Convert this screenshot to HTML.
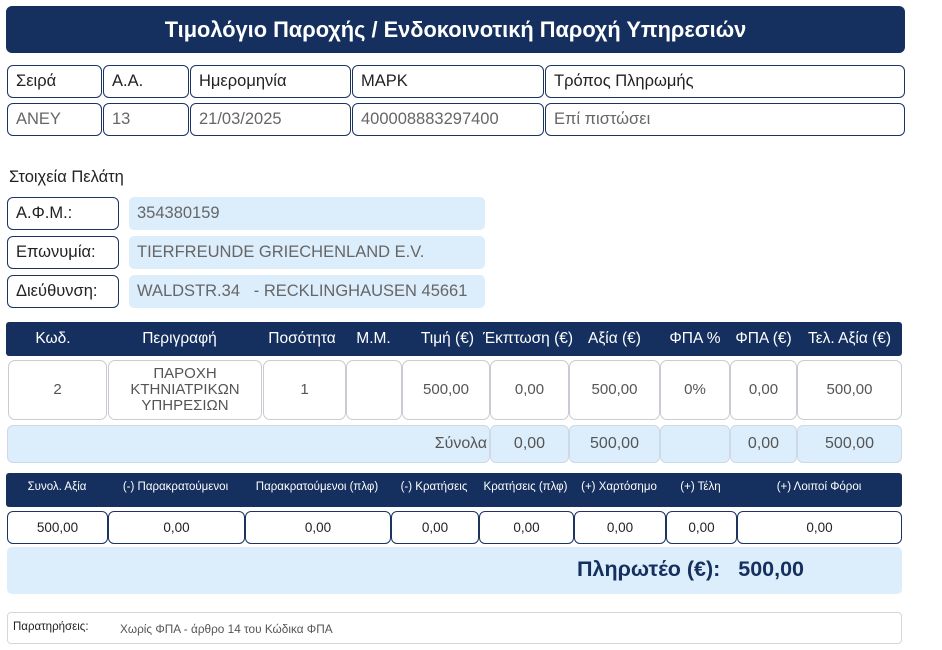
<!DOCTYPE html>
<html><head><meta charset="utf-8"><style>
*{box-sizing:border-box;margin:0;padding:0}
body{width:942px;height:650px;background:#fff;font-family:"Liberation Sans","DejaVu Sans",sans-serif;position:relative;overflow:hidden;color:#333}
.a{position:absolute}
.nav{background:#15305f;color:#fff}
.hdr{left:6px;top:6px;width:899px;height:47px;border-radius:6px;font-weight:bold;font-size:21.8px;display:flex;align-items:center;justify-content:center}
.b{position:absolute;border:1.5px solid #1c3461;border-radius:6px;background:#fff;font-size:16.5px;display:flex;align-items:center;padding-left:8px;color:#222}
.v{color:#666}
.lb{position:absolute;background:#dcedfb;border-radius:5px;font-size:16.5px;color:#666;display:flex;align-items:center;padding-left:8px}
.th{position:absolute;display:flex;align-items:center;justify-content:center;font-size:15.5px;color:#fff;white-space:nowrap}
.c{position:absolute;border:1px solid #c8ccd2;border-radius:7px;background:#fff;display:flex;align-items:center;justify-content:center;text-align:center;font-size:15px;color:#555;line-height:16px}
.t{position:absolute;border:1px solid #cdd9e6;border-radius:6px;background:#dcedfb;display:flex;align-items:center;justify-content:center;font-size:16px;color:#555}
.s{position:absolute;display:flex;align-items:center;justify-content:center;font-size:11.5px;color:#fff;white-space:nowrap}
.w{position:absolute;border:1.5px solid #1c3461;border-radius:6px;background:#fff;display:flex;align-items:center;justify-content:center;font-size:13.5px;color:#222}
</style></head><body>
<div class="a nav hdr">Τιμολόγιο Παροχής / Ενδοκοινοτική Παροχή Υπηρεσιών</div>

<div class="b" style="left:7px;top:65px;width:95px;height:33px">Σειρά</div>
<div class="b" style="left:103px;top:65px;width:86px;height:33px">Α.Α.</div>
<div class="b" style="left:190px;top:65px;width:161px;height:33px">Ημερομηνία</div>
<div class="b" style="left:352px;top:65px;width:192px;height:33px">MAPK</div>
<div class="b" style="left:545px;top:65px;width:360px;height:33px">Τρόπος Πληρωμής</div>
<div class="b v" style="left:7px;top:103px;width:95px;height:33px">ΑΝΕΥ</div>
<div class="b v" style="left:103px;top:103px;width:86px;height:33px">13</div>
<div class="b v" style="left:190px;top:103px;width:161px;height:33px">21/03/2025</div>
<div class="b v" style="left:352px;top:103px;width:192px;height:33px">400008883297400</div>
<div class="b v" style="left:545px;top:103px;width:360px;height:33px">Επί πιστώσει</div>

<div class="a" style="left:9px;top:168px;font-size:16.5px;color:#222">Στοιχεία Πελάτη</div>
<div class="b" style="left:7px;top:197px;width:112px;height:33px">Α.Φ.Μ.:</div>
<div class="b" style="left:7px;top:236px;width:112px;height:33px">Επωνυμία:</div>
<div class="b" style="left:7px;top:275px;width:112px;height:33px">Διεύθυνση:</div>
<div class="lb" style="left:129px;top:197px;width:356px;height:33px">354380159</div>
<div class="lb" style="left:129px;top:236px;width:356px;height:33px">TIERFREUNDE GRIECHENLAND E.V.</div>
<div class="lb" style="left:129px;top:275px;width:356px;height:33px">WALDSTR.34 &nbsp;&nbsp;- RECKLINGHAUSEN 45661</div>

<div class="a nav" style="left:6px;top:322px;width:896px;height:34px;border-radius:3px"></div>
<div class="th" style="left:7px;top:322px;width:92px;height:34px">Κωδ.</div>
<div class="th" style="left:102px;top:322px;width:155px;height:34px">Περιγραφή</div>
<div class="th" style="left:262px;top:322px;width:80px;height:34px">Ποσότητα</div>
<div class="th" style="left:346px;top:322px;width:55px;height:34px">Μ.Μ.</div>
<div class="th" style="left:402px;top:322px;width:88px;height:34px;justify-content:flex-end;padding-right:16px">Τιμή (€)</div>
<div class="th" style="left:487px;top:322px;width:82px;height:34px">Έκπτωση (€)</div>
<div class="th" style="left:569px;top:322px;width:91px;height:34px">Αξία (€)</div>
<div class="th" style="left:660px;top:322px;width:70px;height:34px">ΦΠΑ %</div>
<div class="th" style="left:730px;top:322px;width:67px;height:34px">ΦΠΑ (€)</div>
<div class="th" style="left:797px;top:322px;width:105px;height:34px">Τελ. Αξία (€)</div>

<div class="c" style="left:8px;top:360px;width:99px;height:60px">2</div>
<div class="c" style="left:108px;top:360px;width:154px;height:60px">ΠΑΡΟΧΗ<br>ΚΤΗΝΙΑΤΡΙΚΩΝ<br>ΥΠΗΡΕΣΙΩΝ</div>
<div class="c" style="left:263px;top:360px;width:83px;height:60px">1</div>
<div class="c" style="left:346px;top:360px;width:56px;height:60px"></div>
<div class="c" style="left:402px;top:360px;width:88px;height:60px">500,00</div>
<div class="c" style="left:490px;top:360px;width:79px;height:60px">0,00</div>
<div class="c" style="left:569px;top:360px;width:91px;height:60px">500,00</div>
<div class="c" style="left:660px;top:360px;width:70px;height:60px">0%</div>
<div class="c" style="left:730px;top:360px;width:67px;height:60px">0,00</div>
<div class="c" style="left:797px;top:360px;width:105px;height:60px">500,00</div>

<div class="t" style="left:7px;top:425px;width:483px;height:38px;justify-content:flex-end;padding-right:2px">Σύνολα</div>
<div class="t" style="left:490px;top:425px;width:79px;height:38px">0,00</div>
<div class="t" style="left:569px;top:425px;width:91px;height:38px">500,00</div>
<div class="t" style="left:660px;top:425px;width:70px;height:38px"></div>
<div class="t" style="left:730px;top:425px;width:67px;height:38px">0,00</div>
<div class="t" style="left:797px;top:425px;width:105px;height:38px">500,00</div>

<div class="a nav" style="left:6px;top:473px;width:896px;height:34px;border-radius:3px"></div>
<div class="s" style="left:7px;top:473px;width:100px;height:28px">Συνολ. Αξία</div>
<div class="s" style="left:107px;top:473px;width:137px;height:28px">(-) Παρακρατούμενοι</div>
<div class="s" style="left:244px;top:473px;width:146px;height:28px">Παρακρατούμενοι (πλφ)</div>
<div class="s" style="left:390px;top:473px;width:88px;height:28px">(-) Κρατήσεις</div>
<div class="s" style="left:478px;top:473px;width:95px;height:28px">Κρατήσεις (πλφ)</div>
<div class="s" style="left:573px;top:473px;width:92px;height:28px">(+) Χαρτόσημο</div>
<div class="s" style="left:665px;top:473px;width:71px;height:28px">(+) Τέλη</div>
<div class="s" style="left:736px;top:473px;width:166px;height:28px">(+) Λοιποί Φόροι</div>

<div class="w" style="left:7px;top:511px;width:101px;height:33px">500,00</div>
<div class="w" style="left:108px;top:511px;width:137px;height:33px">0,00</div>
<div class="w" style="left:245px;top:511px;width:146px;height:33px">0,00</div>
<div class="w" style="left:391px;top:511px;width:88px;height:33px">0,00</div>
<div class="w" style="left:479px;top:511px;width:95px;height:33px">0,00</div>
<div class="w" style="left:574px;top:511px;width:92px;height:33px">0,00</div>
<div class="w" style="left:666px;top:511px;width:71px;height:33px">0,00</div>
<div class="w" style="left:737px;top:511px;width:165px;height:33px">0,00</div>

<div class="a" style="left:7px;top:547px;width:895px;height:47px;background:#dcedfb;border-radius:5px"></div>
<div class="a" style="left:577px;top:557px;font-size:21.5px;font-weight:bold;color:#15305f;white-space:nowrap">Πληρωτέο (€):&nbsp;&nbsp;&nbsp;500,00</div>

<div class="a" style="left:7px;top:612px;width:895px;height:32px;border:1.5px solid #d4d7dc;border-radius:4px;background:#fff"></div>
<div class="a" style="left:13px;top:621px;font-size:11.5px;color:#222">Παρατηρήσεις:</div>
<div class="a" style="left:120px;top:622px;font-size:11.8px;color:#555">Χωρίς ΦΠΑ - άρθρο 14 του Κώδικα ΦΠΑ</div>
</body></html>
